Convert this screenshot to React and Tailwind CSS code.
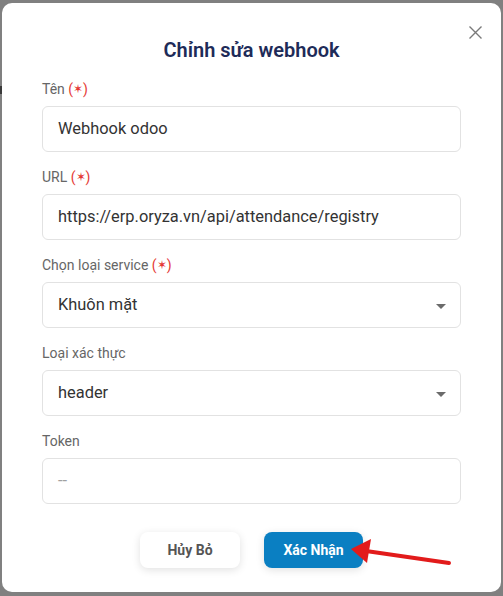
import React from "react";

const Req = () => (
  <span className="text-[#e53935]"> (<span className="text-[12px] relative top-[-1px]">✶</span>)</span>
);

const Field = ({ label, req, value, placeholder, select }) => (
  <div className="flex flex-col">
    <div className="h-[20px] leading-[20px] text-[14px] text-[#666666]">
      {label}
      {req && <Req />}
    </div>
    <div className="mt-[7px] h-[46px] rounded-[6px] border border-[#e2e2e2] flex items-center pl-[15px] pr-[14px]">
      <span className={"flex-1 text-[16.4px] " + (placeholder ? "text-[#a0a0a0]" : "text-[#333333]")}>
        {value || placeholder}
      </span>
      {select && (
        <svg width="10" height="5" viewBox="0 0 10 5" className="mt-[2px]">
          <path d="M0 0 L10 0 L5 5 Z" fill="#6b6b6b" />
        </svg>
      )}
    </div>
  </div>
);

export default function App() {
  return (
    <div
      className="w-[503px] h-[596px] bg-[#808080] relative overflow-hidden"
      style={{ fontFamily: "Roboto, 'Noto Sans', sans-serif" }}
    >
      <div className="absolute left-0 top-[86px] w-[2px] h-[8px] bg-[#3a3a3a]" />
      <div className="ml-[2px] mt-[3px] w-[499px] h-[589px] bg-white rounded-[10px] relative flex flex-col px-[40px] pt-[33px]">
        <svg width="13" height="13" viewBox="0 0 13 13" className="absolute left-[467px] top-[23px]">
          <path d="M0.5 0.5 L12.5 12.5 M12.5 0.5 L0.5 12.5" stroke="#7a7a7a" strokeWidth="1.4" />
        </svg>
        <h2 className="text-center text-[20px] leading-[28px] font-semibold text-[#1e2b58]">Chỉnh sửa webhook</h2>
        <div className="mt-[15px] flex flex-col gap-[15px]">
          <Field label="Tên" req value="Webhook odoo" />
          <Field label="URL" req value="https://erp.oryza.vn/api/attendance/registry" />
          <Field label="Chọn loại service" req value="Khuôn mặt" select />
          <Field label="Loại xác thực" value="header" select />
          <Field label="Token" placeholder="--" />
        </div>
        <div className="mt-[28px] flex justify-center gap-[24px]">
          <button className="w-[100px] h-[36px] rounded-[8px] bg-white text-[#555555] font-bold text-[14px] shadow-[0_2px_8px_rgba(0,0,0,0.12)]">
            Hủy Bỏ
          </button>
          <button className="w-[99px] h-[36px] rounded-[8px] bg-[#0a7fc2] text-white font-bold text-[14px] shadow-[0_2px_8px_rgba(0,0,0,0.12)]">
            Xác Nhận
          </button>
        </div>
      </div>
      <svg width="503" height="596" className="absolute left-0 top-0 pointer-events-none">
        <path d="M449 563 L366 551" stroke="#e21b1b" strokeWidth="4" strokeLinecap="round" />
        <path d="M351 549 L371 539 L367 563 Z" fill="#e21b1b" />
      </svg>
    </div>
  );
}
